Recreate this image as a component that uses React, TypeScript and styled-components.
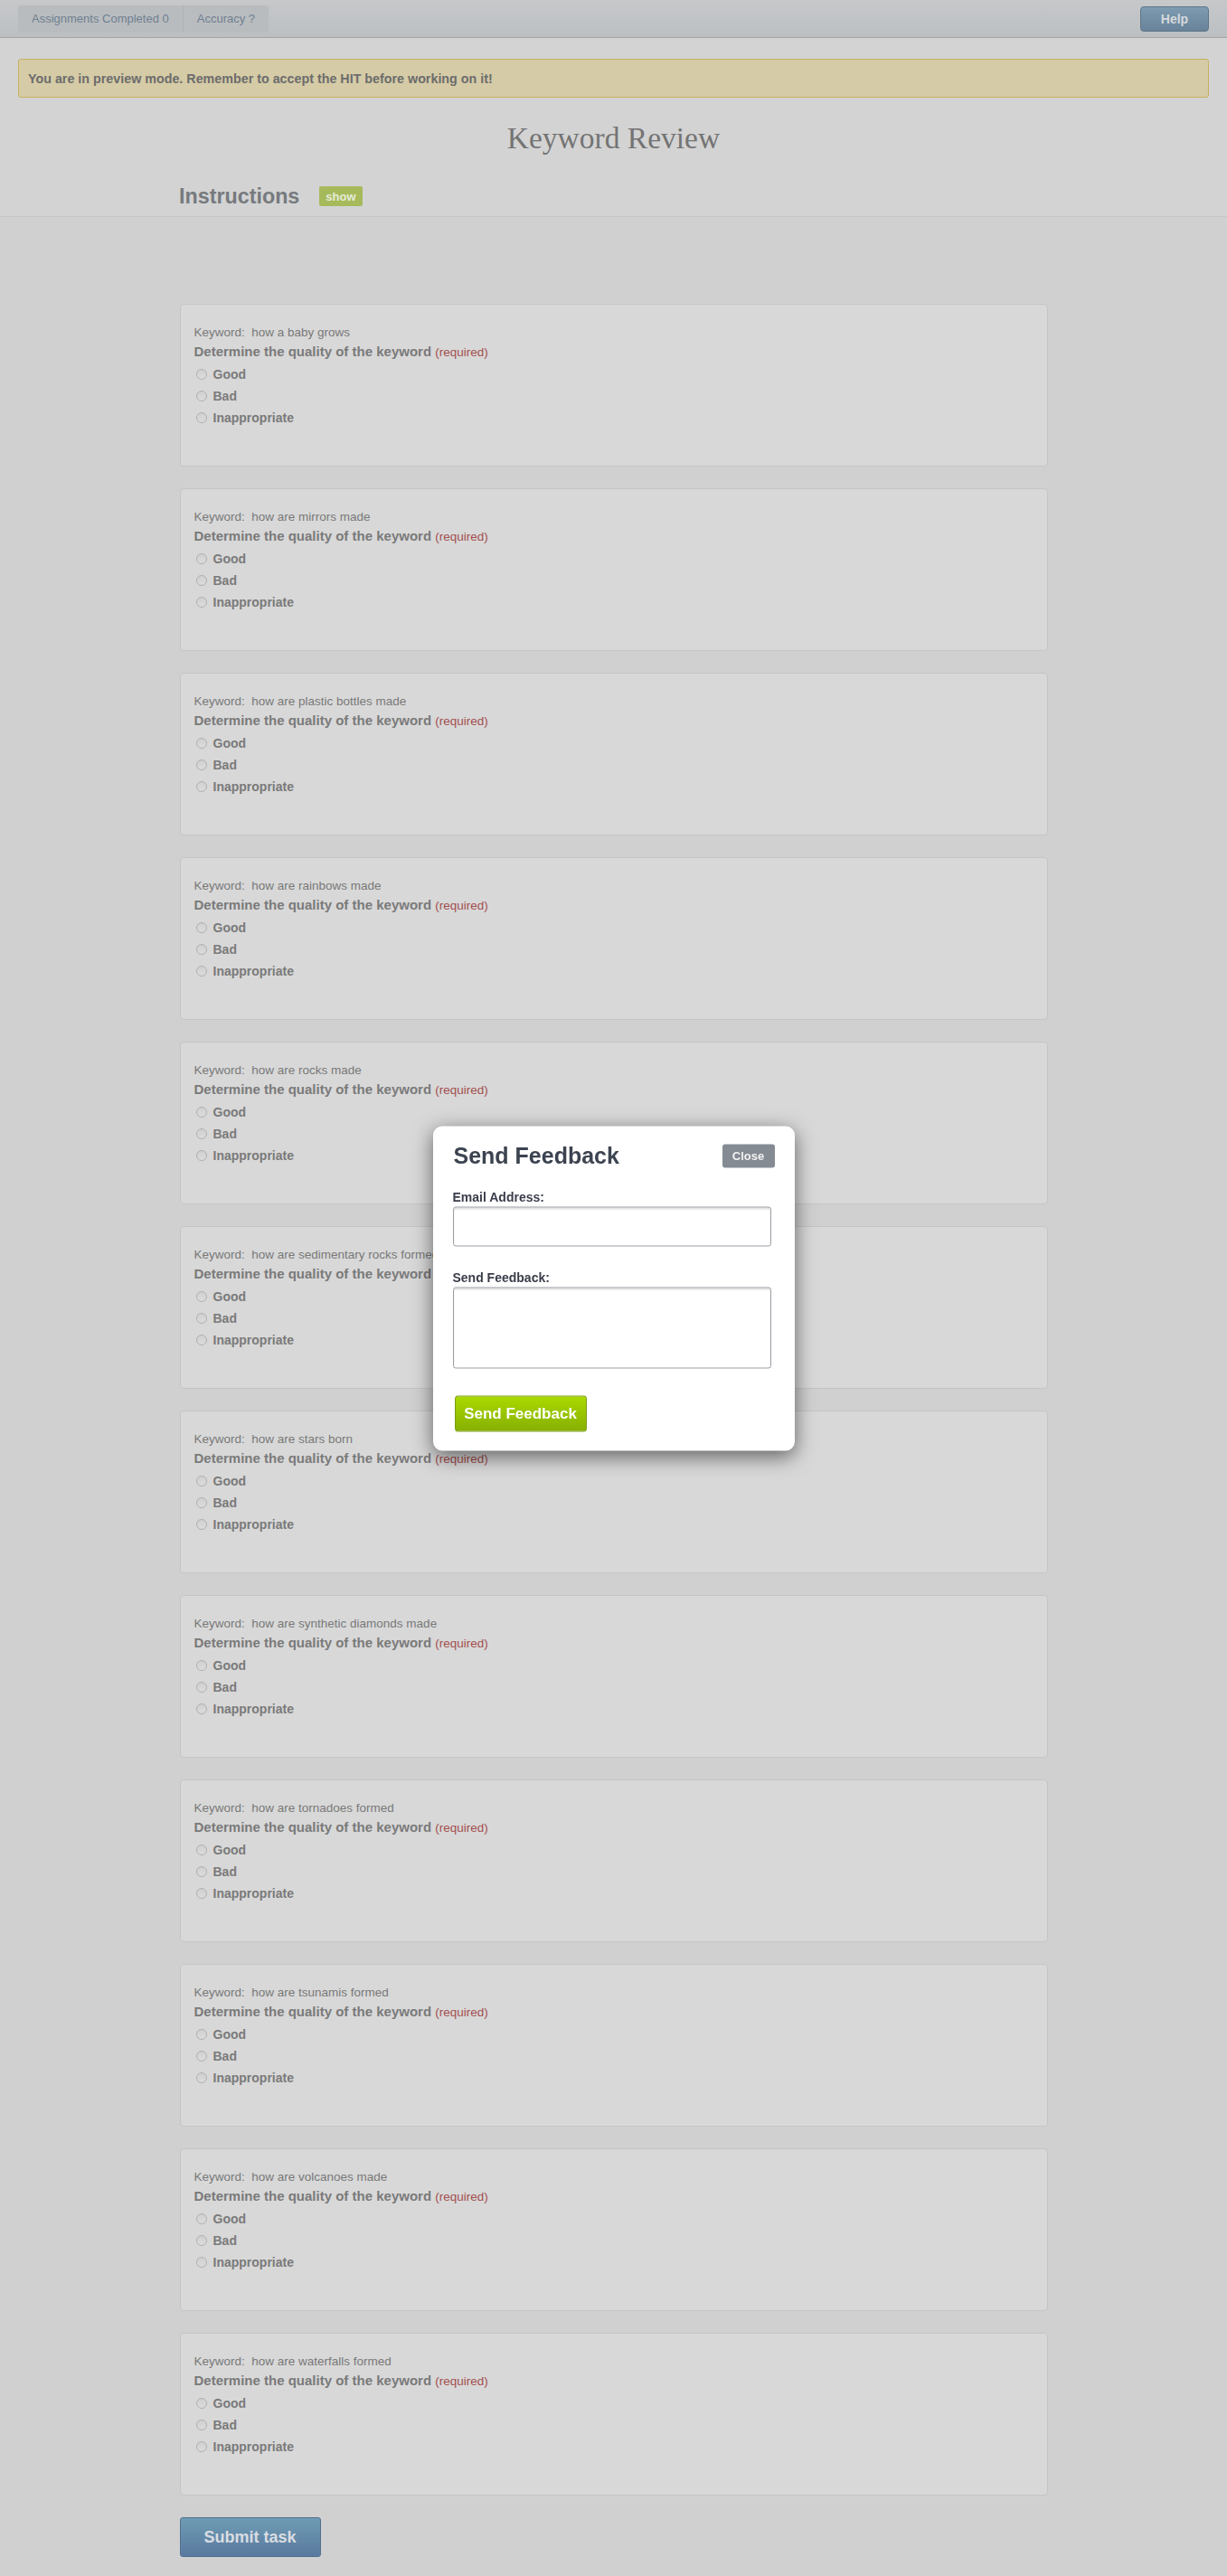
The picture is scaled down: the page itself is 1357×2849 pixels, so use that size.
import React from "react";
import styled, { createGlobalStyle } from "styled-components";

const GlobalStyle = createGlobalStyle`
  html, body { margin: 0; padding: 0; }
  body {
    background: #d0d0d0;
    font-family: "Liberation Sans", Arial, sans-serif;
    color: #777;
  }
  * { box-sizing: border-box; }
`;

const Page = styled.div`
  min-height: 2849px;
  display: flex;
  flex-direction: column;
`;

const TopBar = styled.div`
  height: 42px;
  display: flex;
  align-items: center;
  justify-content: space-between;
  padding: 0 20px;
  background: linear-gradient(#c6c8ca, #bcbfc2);
  border-bottom: 1px solid #a2a4a6;
`;

const Tabs = styled.div`
  display: flex;
  height: 30px;
  border-radius: 3px;
  background: #b9bcbf;
  overflow: hidden;
`;

const Tab = styled.div`
  display: flex;
  align-items: center;
  padding: 0 15px;
  font-size: 13px;
  color: #6f8091;
  & + & { border-left: 1px solid #b0b3b6; }
`;

const HelpButton = styled.button`
  width: 76px;
  height: 28px;
  border: 1px solid #5e7689;
  border-radius: 4px;
  background: linear-gradient(#7d9bb1, #68829a);
  color: #d6d9dc;
  font-family: "Liberation Sans", Arial, sans-serif;
  font-weight: bold;
  font-size: 14px;
`;

const Header = styled.div`
  background: #d3d3d3;
  border-bottom: 1px solid #c7c7c7;
  padding: 23px 20px 0;
`;

const Banner = styled.div`
  height: 43px;
  display: flex;
  align-items: center;
  padding: 0 10px;
  background: #d5cba6;
  border: 1px solid #c7b15c;
  border-radius: 3px;
  font-size: 14.3px;
  font-weight: bold;
  color: #6c6c6c;
`;

const Title = styled.h1`
  margin: 25px 0 0;
  text-align: center;
  font-family: "Liberation Serif", "Times New Roman", serif;
  font-weight: normal;
  font-size: 33.5px;
  line-height: 40px;
  color: #747474;
`;

const InstructionsRow = styled.div`
  display: flex;
  align-items: center;
  gap: 22px;
  height: 44px;
  margin-top: 22px;
  padding-left: 178px;
`;

const InstructionsTitle = styled.h2`
  margin: 0;
  font-size: 23.3px;
  font-weight: bold;
  color: #767a7e;
`;

const ShowBadge = styled.span`
  display: inline-flex;
  align-items: center;
  height: 22px;
  padding: 0 7px;
  border-radius: 2px;
  background: #a6ba5c;
  color: #e6ecd8;
  font-size: 13px;
  font-weight: bold;
`;

const Main = styled.div`
  width: 960px;
  margin: 96px auto 0;
  display: flex;
  flex-direction: column;
  gap: 24px;
`;

const Card = styled.div`
  height: 180px;
  padding: 22px 15px;
  background: #d8d8d8;
  border: 1px solid #c5c5c5;
  border-radius: 4px;
`;

const KeywordLine = styled.div`
  font-size: 13.5px;
  line-height: 18px;
  color: #787878;
  white-space: pre;
`;

const Question = styled.div`
  margin-top: 2px;
  font-size: 15px;
  line-height: 20px;
  font-weight: bold;
  color: #7a7a7a;
`;

const Required = styled.span`
  font-size: 13.5px;
  font-weight: normal;
  color: #a24f4f;
`;

const Options = styled.div`
  margin-top: 2px;
  display: flex;
  flex-direction: column;
`;

const OptionRow = styled.label`
  display: flex;
  align-items: center;
  gap: 7px;
  height: 24px;
  padding-left: 2px;
  font-size: 14px;
  font-weight: bold;
  color: #7a7a7a;
`;

const Radio = styled.input`
  appearance: none;
  margin: 0;
  width: 12px;
  height: 12px;
  border-radius: 50%;
  border: 1px solid #b0b0b0;
  background: linear-gradient(#d0d0d0, #dcdcdc);
`;

const SubmitButton = styled.button`
  align-self: flex-start;
  width: 156px;
  height: 44px;
  margin: 0 0 22px;
  border: 1px solid #52708f;
  border-radius: 3px;
  background: linear-gradient(#6e9cb3, #5a79a0);
  color: #d9dde2;
  font-family: "Liberation Sans", Arial, sans-serif;
  font-weight: bold;
  font-size: 18px;
`;

const Modal = styled.div`
  position: fixed;
  left: 50%;
  top: 50%;
  transform: translate(-50%, -50%);
  width: 400px;
  height: 359px;
  padding: 20px 22px 0 22px;
  background: #fff;
  border-radius: 10px;
  box-shadow: 0 6px 22px rgba(0, 0, 0, 0.55);
  display: flex;
  flex-direction: column;
`;

const ModalHeader = styled.div`
  display: flex;
  align-items: center;
  justify-content: space-between;
  height: 26px;
`;

const ModalTitle = styled.h3`
  margin: 0 0 0 1px;
  font-size: 25px;
  font-weight: bold;
  color: #3c4350;
`;

const CloseButton = styled.button`
  width: 58px;
  height: 26px;
  border: none;
  border-radius: 3px;
  background: #858b92;
  color: #f2f2f2;
  font-family: "Liberation Sans", Arial, sans-serif;
  font-weight: bold;
  font-size: 13px;
`;

const FieldLabel = styled.div<{ $gap: number }>`
  margin-top: ${(p) => p.$gap}px;
  font-size: 14px;
  line-height: 16px;
  font-weight: bold;
  color: #3a3d4a;
`;

const TextInput = styled.input`
  display: block;
  margin-top: 3px;
  width: 352px;
  height: 44px;
  border: 1px solid #9a9ea4;
  border-radius: 3px;
  box-shadow: inset 0 2px 2px rgba(0, 0, 0, 0.12);
  background: #fff;
`;

const TextArea = styled.textarea`
  display: block;
  margin-top: 3px;
  width: 352px;
  height: 90px;
  resize: none;
  border: 1px solid #9a9ea4;
  border-radius: 3px;
  box-shadow: inset 0 2px 2px rgba(0, 0, 0, 0.12);
  background: #fff;
`;

const SendButton = styled.button`
  align-self: flex-start;
  margin: 30px 0 0 2px;
  width: 146px;
  height: 40px;
  border: 1px solid #7c9c12;
  border-radius: 3px;
  background: linear-gradient(#aad900, #86b000);
  color: #fff;
  font-family: "Liberation Sans", Arial, sans-serif;
  font-weight: bold;
  font-size: 17px;
`;

const keywords = [
  "how a baby grows",
  "how are mirrors made",
  "how are plastic bottles made",
  "how are rainbows made",
  "how are rocks made",
  "how are sedimentary rocks formed",
  "how are stars born",
  "how are synthetic diamonds made",
  "how are tornadoes formed",
  "how are tsunamis formed",
  "how are volcanoes made",
  "how are waterfalls formed",
];

const options = ["Good", "Bad", "Inappropriate"];

export default function App() {
  return (
    <Page>
      <GlobalStyle />
      <TopBar>
        <Tabs>
          <Tab>Assignments Completed 0</Tab>
          <Tab>Accuracy ?</Tab>
        </Tabs>
        <HelpButton>Help</HelpButton>
      </TopBar>
      <Header>
        <Banner>You are in preview mode. Remember to accept the HIT before working on it!</Banner>
        <Title>Keyword Review</Title>
        <InstructionsRow>
          <InstructionsTitle>Instructions</InstructionsTitle>
          <ShowBadge>show</ShowBadge>
        </InstructionsRow>
      </Header>
      <Main>
        {keywords.map((k, i) => (
          <Card key={k}>
            <KeywordLine>{`Keyword:  ${k}`}</KeywordLine>
            <Question>
              Determine the quality of the keyword <Required>(required)</Required>
            </Question>
            <Options>
              {options.map((o) => (
                <OptionRow key={o}>
                  <Radio type="radio" name={`q${i}`} />
                  {o}
                </OptionRow>
              ))}
            </Options>
          </Card>
        ))}
        <SubmitButton>Submit task</SubmitButton>
      </Main>
      <Modal>
        <ModalHeader>
          <ModalTitle>Send Feedback</ModalTitle>
          <CloseButton>Close</CloseButton>
        </ModalHeader>
        <FieldLabel $gap={24}>Email Address:</FieldLabel>
        <TextInput type="text" />
        <FieldLabel $gap={26}>Send Feedback:</FieldLabel>
        <TextArea />
        <SendButton>Send Feedback</SendButton>
      </Modal>
    </Page>
  );
}
